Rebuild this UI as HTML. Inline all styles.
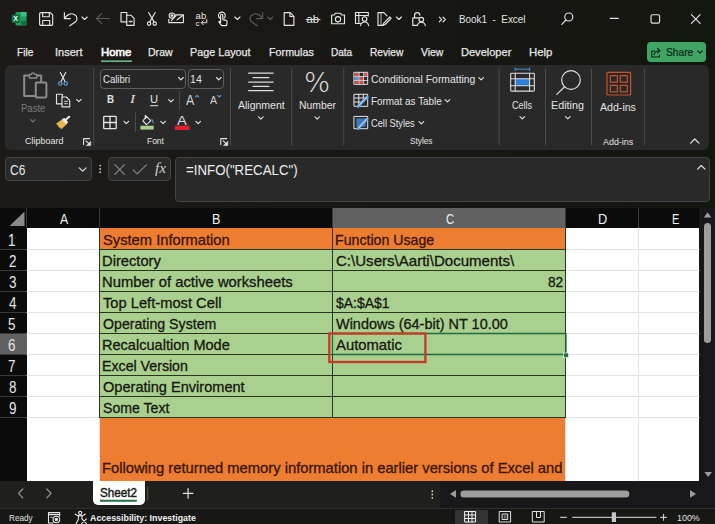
<!DOCTYPE html>
<html lang="en"><head><meta charset="utf-8"><title>Book1 - Excel</title>
<style>
html,body{margin:0;padding:0;background:#1b1816;}
#app{position:relative;width:715px;height:524px;overflow:hidden;background:linear-gradient(90deg,#1d1917 0%,#1a1815 35%,#161712 65%,#141610 100%);font-family:"Liberation Sans",sans-serif;}
.a{position:absolute;box-sizing:border-box;}
.t{position:absolute;white-space:pre;transform-origin:0 50%;font-family:"Liberation Sans",sans-serif;}
#ribbon{left:5px;top:64.5px;width:704px;height:85px;background:#292929;border-radius:6px;}
#share{left:647px;top:41.5px;width:59px;height:20.5px;background:#3fa562;border-radius:4px;}
.box{background:#292929;border:1px solid #444444;border-radius:4px;}
.inp{background:#262626;border:1px solid #5c5c5c;border-radius:4px;}
#ov{position:absolute;left:0;top:0;width:715px;height:524px;}

</style></head>
<body>
<div id="app">
<div class="a" id="ribbon"></div>
<div class="a" id="share"></div>
<div class="a inp" style="left:100px;top:68.5px;width:86px;height:20px;"></div>
<div class="a inp" style="left:187.5px;top:68.5px;width:36px;height:20px;"></div>
<div class="a box" style="left:5px;top:156.5px;width:86.5px;height:24px;"></div>
<div class="a box" style="left:108px;top:156.5px;width:63px;height:24px;"></div>
<div class="a box" style="left:174.5px;top:156.5px;width:535px;height:45.3px;"></div>
<!-- grid -->
<div class="a" style="left:0;top:208px;width:715px;height:272.5px;background:#0b0b0b;"></div>
<div class="a" style="left:27px;top:228px;width:672px;height:252.5px;background:#ffffff;"></div>
<div class="a" style="left:333px;top:208px;width:233px;height:20px;background:#616161;"></div>
<div class="a" style="left:0;top:334px;width:26.5px;height:20.5px;background:#616161;"></div>
<div class="a" style="left:699px;top:208px;width:16px;height:300px;background:#18181a;"></div>
<div class="a" style="left:100px;top:228px;width:466px;height:21px;background:#ed7d31;"></div>
<div class="a" style="left:100px;top:249px;width:466px;height:169px;background:#a9d08e;"></div>
<div class="a" style="left:100px;top:418px;width:466px;height:62.5px;background:#ed7d31;"></div>
<!-- tabs / status -->
<div class="a" style="left:0;top:480.5px;width:715px;height:28px;background:#1f1f1d;"></div>
<div class="a" style="left:440px;top:480.5px;width:275px;height:28px;background:#18181a;"></div>
<div class="a" style="left:93px;top:480.5px;width:52px;height:24px;background:#ffffff;border-radius:0 0 5px 5px;"></div>
<div class="a" style="left:0;top:508px;width:715px;height:16px;background:#171715;border-top:1px solid #2e2e2c;"></div>
<div class="a" style="left:454.5px;top:509.5px;width:33px;height:14.5px;background:#333333;"></div>
<svg id="ov" viewBox="0 0 715 524" fill="none" stroke-linecap="round" stroke-linejoin="round">
<!-- title bar icons -->
<g stroke="#e4e4e4" stroke-width="1.15">
<!-- excel logo -->
<rect x="15.5" y="12" width="11" height="13.5" rx="1.2" fill="#1f9c5c" stroke="none"/>
<rect x="21" y="12" width="5.5" height="4.5" fill="#35c283" stroke="none"/>
<rect x="21" y="21" width="5.5" height="4.5" fill="#12703f" stroke="none"/>
<rect x="11.7" y="14.5" width="8" height="8.5" rx="1" fill="#0f6f3c" stroke="none"/>
<!-- save -->
<path d="M41 12.6h9.3l2.4 2.4v9a1.4 1.4 0 0 1-1.4 1.4H41a1.4 1.4 0 0 1-1.4-1.4V14A1.400 1.400 0 0 1 41 12.600z"/>
<path d="M42.700 12.800v3.900h6.600v-3.900M42.700 25.200v-4.700h7v4.700"/>
<!-- undo -->
<path d="M64.400 12.600v6h6"/>
<path d="M64.600 18.400c2.200-3.800 6.400-5.600 9.700-4c3 1.600 3.600 5 1.300 7.400l-5.800 4"/>
<path d="M82 17l2.600 2.500l2.600-2.500"/>
<!-- copy/paste -->
<path d="M126.600 21.800h-5.600v-9.300h5.800v2.700"/>
<path d="M126.700 15.200h4.200l3.200 3.200v7h-7.400z"/>
<path d="M129.500 21.500h2.400" stroke-width="1.600"/>
<!-- scissors -->
<path d="M148.600 12.500l5.400 9.400M155.200 12.500l-5.400 9.400"/>
<circle cx="149.100" cy="23.600" r="1.700"/><circle cx="154.700" cy="23.600" r="1.700"/>
<!-- signature mail -->
<path d="M175.500 14.800h7.900v7.800h-14.600v-3.400"/>
<path d="M176 15.500l-4.600 5.200M183 15.200l-5.800 4.600"/>
<circle cx="171.800" cy="15.600" r="2.600"/><circle cx="171.800" cy="15.600" r="0.800"/>
<!-- hand -->
<path d="M220.400 18.600a3.400 3.400 0 1 1 3.800-0.600"/>
<path d="M220.600 22.400v-7a1.100 1.100 0 0 1 2.200 0v4.200l3.300 0.800c0.800 0.200 1.100 0.800 1 1.600l-0.600 3.600h-4.800l-2.900-3.800c0.500-0.800 1.200-0.600 1.800 0.600z"/>
<path d="M234.800 17l2.600 2.500l2.600-2.500"/>
<!-- new doc -->
<path d="M284.200 12.600h6l3.700 3.700v9.100h-9.700z"/><path d="M290 12.800v3.700h3.700"/>
<!-- camera -->
<path d="M331.600 15h2.600l1.200-1.800h5.200l1.200 1.800h2.700v8.700h-12.900z"/>
<circle cx="338" cy="19.300" r="2.600"/>
<!-- table person -->
<path d="M360.500 23.500h-5v-11h12.800v3.500M355.500 15.500h12.800M358.800 12.500v11"/>
<circle cx="364.600" cy="19" r="2.300"/>
<path d="M360.600 25.600c0.500-2.600 2-3.600 4-3.600s3.500 1 4 3.600"/>
<!-- doc pencil -->
<path d="M383 25.400h-5.000v-12.800h5.800l3.200 3.200"/>
<path d="M389.800 17l-6 6.200l-1 2.200l2.300-0.900l6-6.200z"/>
<path d="M381 13v12" stroke-width="0.800"/>
<path d="M396.400 17l2.500 2.500l2.500-2.500"/>
<!-- lock person -->
<path d="M417 25.400h-4.200v-7.600h6M414.600 17.600v-2.400a2.600 2.600 0 0 1 5.200 0"/>
<circle cx="421.300" cy="19.600" r="2.300"/>
<path d="M417.200 25.600c0.500-2.400 2-3.400 4.100-3.400s3.600 1 4.100 3.400"/>
<!-- >> -->
<path d="M439.300 17.200l2.300 2.300l-2.300 2.300M443 17.200l2.300 2.300l-2.300 2.300"/>
<path d="M101 61.200h31" stroke="#63b487" stroke-width="1.700" stroke-linecap="butt"/>
<!-- search -->
<circle cx="568.800" cy="17" r="4"/><path d="M566 20l-4.200 4.400"/>
<!-- window controls -->
<path d="M610.200 18.300h8"/>
<rect x="651" y="14.700" width="8.600" height="8.400" rx="1.600"/>
<path d="M691.400 14.700l8.800 8.600M700.200 14.700l-8.800 8.600"/>
</g>
<g stroke="#5a5a5a" stroke-width="1.150">
<path d="M96.600 18.500h13M101.800 13.300l-5.200 5.200l5.200 5.200"/>
<path d="M262.700 12.600v6h-6"/>
<path d="M262.500 18.400c-2.200-3.800-6.400-5.600-9.700-4c-3 1.600-3.600 5-1.300 7.400l5.800 4"/>
<path d="M267.800 17l2.500 2.500l2.500-2.500"/>
</g>
<g font-family="Liberation Sans, sans-serif" fill="#e4e4e4" stroke="none">
<text x="13.300" y="21.400" font-size="7" font-weight="bold" fill="#ffffff">X</text>
<text x="195.600" y="18.600" font-size="9.500">ab</text>
<text x="195.600" y="25.800" font-size="8">c</text>
<text x="306.600" y="23" font-size="11" textLength="12.500" lengthAdjust="spacingAndGlyphs">ab</text>
</g>
<g stroke="#e4e4e4" stroke-width="1">
<path d="M206.800 19.500v3.200h-5.500M203.300 20.700l-2 2l2 2"/>
<path d="M306 19.600h14"/>
</g>
<!-- ribbon separators -->
<g stroke="#4b4b4b" stroke-width="1">
<path d="M93.700 69v76M230.500 69v76M291.700 69v76M343.800 69v76M499.200 69v76M545.500 69v76M591.500 69v76M644.600 69v76"/>
<path d="M179.600 91.500v18.500M135.500 113v18.500"/>
</g>
<!-- paste -->
<g stroke="#8c8c8c" stroke-width="2">
<path d="M34.500 96h-10.300v-20.600h4.800M37 75.400h4.200v6"/>
<path d="M29.400 78v-3.600h2.200a1.500 1.500 0 0 1 3 0h2.200v3.600z" stroke-width="1.300"/>
<rect x="35.800" y="82.600" width="10.600" height="15" rx="1"/>
</g>
<path d="M30.600 119.600l2.300 2.300l2.300-2.300" stroke="#7a7a7a" stroke-width="1.100"/>
<!-- scissors -->
<g stroke-width="1.150">
<path d="M60.300 72.400l4.700 9.200M65.700 72.400l-4.700 9.200" stroke="#e4e4e4"/>
<circle cx="60.300" cy="83.500" r="1.700" stroke="#5b9bd5"/><circle cx="65.700" cy="83.500" r="1.700" stroke="#5b9bd5"/>
</g>
<!-- copy -->
<g stroke="#e4e4e4" stroke-width="1.150">
<path d="M61.500 103.800h-5v-9.600h5.800v2.800"/>
<path d="M62 97h4.300l3.400 3.400v6.400h-7.700z"/>
<path d="M64.500 101.300h3M64.500 103.700h3" stroke-width="0.900"/>
<path d="M76.600 99.400l2.300 2.300l2.300-2.300"/>
</g>
<!-- format painter -->
<path d="M57 123.500l5.500-4l3.800 4.600l-4.300 4.300c-2.400-0.400-4-2.200-5-4.900z" fill="#e8b84a" stroke="#e8b84a" stroke-width="0.800"/>
<path d="M62.500 119.500l1.500-1.500l3.800 4l-1.500 2z" fill="#f2f2f2" stroke="#f2f2f2" stroke-width="0.600"/>
<path d="M66 119.500l3.200-2.800" stroke="#f2f2f2" stroke-width="2"/>
<!-- launchers -->
<g stroke="#e4e4e4" stroke-width="1.100">
<path d="M83.600 144.600v-6h6M86 140.800l3.400 3.400"/>
<path d="M90.600 141.600v4h-4z" fill="#e4e4e4" stroke-width="0.600"/>
<path d="M220.800 144.600v-6h6M223.200 140.800l3.400 3.400"/>
<path d="M227.800 141.600v4h-4z" fill="#e4e4e4" stroke-width="0.600"/>
</g>
<!-- font chevrons -->
<g stroke="#e4e4e4" stroke-width="1.150">
<path d="M178.600 77.500l2.300 2.300l2.300-2.300"/>
<path d="M216.400 77.500l2.300 2.300l2.300-2.300"/>
<path d="M168.700 99.600l2.300 2.300l2.300-2.300"/>
<path d="M124 121.400l2.300 2.300l2.300-2.300"/>
<path d="M160.800 121.400l2.300 2.300l2.300-2.300"/>
<path d="M195.900 121.400l2.300 2.300l2.300-2.300"/>
<path d="M150.600 105.700h7.200" stroke-width="1"/>
</g>
<g stroke="#5b9bd5" stroke-width="1.100">
<path d="M195.400 97l1.600-1.700l1.600 1.700"/>
<path d="M217.600 95.300l1.600 1.700l1.600-1.700"/>
</g>
<!-- borders icon -->
<g stroke="#e4e4e4" stroke-width="1.300">
<rect x="103.700" y="116.400" width="12.500" height="12.300" rx="0.800"/>
<path d="M110 116.400v12.300M103.700 122.500h12.500"/>
</g>
<!-- fill bucket -->
<g stroke="#e4e4e4" stroke-width="1.100">
<path d="M146.200 116.200l4.600 4.600l-4.400 3.800l-3.400-3.600z"/>
<path d="M145.400 115.200v3.400"/>
<path d="M151.800 119.400c1 1.300 1.400 2.200 1.400 3.400" stroke="#5b9bd5"/>
</g>
<rect x="140.400" y="125.700" width="13.300" height="3.900" fill="#a9d08e"/>
<rect x="174.900" y="125.700" width="14.500" height="4.300" fill="#e0202a"/>
<!-- alignment -->
<g stroke="#dcdcdc" stroke-width="1.200">
<path d="M248.600 73.200h24.600M253 77.600h15.800M248.600 82.100h24.600M253 86.400h15.800M248.600 90.600h24.600"/>
<path d="M258.500 116.800l2.300 2.300l2.300-2.300"/>
<path d="M314.900 116.800l2.300 2.300l2.300-2.300"/>
<path d="M520 116.600l2.300 2.300l2.300-2.300"/>
<path d="M565.500 116.600l2.300 2.300l2.300-2.300"/>
</g>
<!-- conditional formatting -->
<g stroke-width="1">
<rect x="354.300" y="72.300" width="13.400" height="12" fill="#292929" stroke="#e4e4e4"/>
<rect x="355" y="73" width="3.800" height="3" fill="#e04a4a"/><rect x="355" y="77" width="3.800" height="3" fill="#5b9bd5"/><rect x="355" y="81" width="3.800" height="2.700" fill="#e04a4a"/>
<rect x="359.600" y="77" width="3.600" height="3" fill="#e04a4a"/><rect x="359.600" y="81" width="3.600" height="2.700" fill="#e04a4a"/><rect x="364" y="73" width="3.200" height="3" fill="#e04a4a"/>
<path d="M354.300 76.500h13.400M354.300 80.500h13.400M359.200 72.300v12M363.600 72.300v12" stroke="#e4e4e4" stroke-width="0.800"/>
</g>
<!-- format as table -->
<g stroke="#e4e4e4" stroke-width="1">
<rect x="354.300" y="94.300" width="13.400" height="12"/>
<path d="M354.300 98h13.400M354.300 102h7M358.800 94.300v12M363.300 94.300v5"/>
<path d="M358 106.500l9-9.500" stroke="#5b9bd5" stroke-width="3"/>
<path d="M358.500 106l8.500-9" stroke="#f2f2f2" stroke-width="0.800"/>
</g>
<!-- cell styles -->
<g stroke="#e4e4e4" stroke-width="1">
<rect x="354.300" y="116.400" width="13.400" height="12.300"/>
<rect x="356.300" y="118.400" width="9.400" height="8.300" fill="#3f78b8" stroke="none"/>
<path d="M358 128.500l9-9.500" stroke="#5b9bd5" stroke-width="3"/>
<path d="M358.500 128l8.500-9" stroke="#f2f2f2" stroke-width="0.800"/>
</g>
<g stroke="#e4e4e4" stroke-width="1.150">
<path d="M478.800 77.600l2.300 2.300l2.300-2.300"/>
<path d="M445.100 99.600l2.300 2.300l2.300-2.300"/>
<path d="M419.100 121.600l2.300 2.300l2.300-2.300"/>
</g>
<!-- cells icon -->
<rect x="515.200" y="78.700" width="14.400" height="7" fill="#2b7fd8"/>
<g stroke="#dcdcdc" stroke-width="1.100">
<rect x="510.700" y="73.300" width="23.600" height="17.800" rx="0.800"/>
<path d="M515.200 73.300v17.800M529.600 73.300v17.800M510.700 78.700h23.600M510.700 85.700h23.600"/>
</g>
<path d="M515.200 69.200h14.400M515.200 67.800v2.800M529.600 67.800v2.800" stroke="#3f8fe0" stroke-width="1"/>
<!-- editing -->
<g stroke="#dcdcdc" stroke-width="1.200">
<circle cx="571" cy="80" r="9.300"/><path d="M564.600 86.800l-7.800 7.600"/>
</g>
<!-- add-ins -->
<g stroke="#c2532a" stroke-width="1.200">
<rect x="607" y="72.400" width="23.600" height="22.600" rx="0.800"/>
<rect x="610.300" y="75.600" width="7" height="6.600"/><rect x="620.300" y="75.600" width="7" height="6.600"/>
<rect x="610.300" y="85.300" width="7" height="6.600"/><rect x="620.300" y="85.300" width="7" height="6.600"/>
</g>
<!-- collapse -->
<path d="M690.600 143.200l4.200-4.200l4.200 4.200" stroke="#e4e4e4" stroke-width="1.200"/>
<!-- share icon -->
<g stroke="#0b2414" stroke-width="1.100">
<path d="M654.500 51h-2.800v6h7.800v-2"/>
<path d="M654 55c0.500-3 2.500-4.300 5-4.300M657.500 48.300l2.600 2.400l-2.600 2.400"/>
<path d="M697.800 51l2.200 2.200l2.200-2.200"/>
</g>
<!-- formula bar icons -->
<g stroke="#e4e4e4" stroke-width="1.150">
<path d="M79.300 167.800l3.400 3.400l3.400-3.400"/>
<path d="M697.600 169.200l3.700-3.700l3.700 3.700"/>
</g>
<g fill="#cfcfcf" stroke="none"><circle cx="100.200" cy="165.600" r="0.900"/><circle cx="100.200" cy="168.900" r="0.900"/><circle cx="100.200" cy="172.200" r="0.900"/></g>
<g stroke="#8a8a8a" stroke-width="1.100">
<path d="M114.800 164.700l9.600 9.600M124.400 164.700l-9.600 9.600"/>
<path d="M133.200 169.800l3.900 4l9.400-9"/>
</g>
<!-- select-all triangle -->
<path d="M24.500 211.500v14.500h-15z" fill="#8a8a8a" stroke="none"/>
<!-- header separators -->
<g stroke="#3a3a3a" stroke-width="1">
<path d="M26.500 208v20M99.500 208v20M332.500 208v20M565.500 208v20M638.500 208v20"/>
<path d="M0 249.500h26.500M0 270.500h26.500M0 291.500h26.500M0 312.500h26.500M0 333.500h26.500M0 354.500h26.500M0 375.500h26.500M0 396.500h26.500M0 417.500h26.500"/>
</g>
<!-- light gridlines -->
<g stroke="#e2e2e2" stroke-width="1">
<path d="M27 249.500h72M27 270.500h72M27 291.500h72M27 312.500h72M27 333.500h72M27 354.500h72M27 375.500h72M27 396.500h72M27 417.500h72"/>
<path d="M566 249.500h133M566 270.500h133M566 291.500h133M566 312.500h133M566 333.500h133M566 354.500h133M566 375.500h133M566 396.500h133M566 417.500h133"/>
<path d="M638.500 228v252.500M99.500 418v62.500M565.500 418v62.500"/>
</g>
<!-- cell borders -->
<g stroke="#27361c" stroke-width="1" stroke-linecap="butt">
<path d="M99 249.500h467M99 270.500h467M99 291.500h467M99 312.500h467M99 333.500h467M99 354.500h467M99 375.500h467M99 396.500h467M99 417.500h467"/>
<path d="M99.500 228v190M332.500 228v190M565.500 228v190"/>
</g>
<!-- selection -->
<rect x="332.500" y="333.500" width="233.500" height="21" stroke="#1e6e42" stroke-width="1.300"/>
<rect x="564" y="353" width="4.500" height="4.500" fill="#1e6e42" stroke="#ffffff" stroke-width="0.600"/>
<!-- red highlight -->
<rect x="329.300" y="333.500" width="96.100" height="28.500" stroke="#cc372c" stroke-width="2.300" stroke-linejoin="miter"/>
<!-- vertical scrollbar -->
<path d="M703.800 217.500l3.800-5l3.800 5z" fill="#9d9d9d" stroke="none"/>
<rect x="704" y="223" width="7" height="120" rx="3.500" fill="#9d9d9d"/>
<path d="M704.400 472l3.800 5l3.800-5z" fill="#9d9d9d" stroke="none"/>
<!-- sheet nav -->
<g stroke="#9a9a9a" stroke-width="1.200">
<path d="M22.800 489l-4.300 4.400l4.300 4.400"/>
<path d="M46.800 489l4.300 4.400l-4.300 4.400"/>
</g>
<path d="M147.800 487v13" stroke="#555" stroke-width="1"/>
<path d="M100 500.700h36.800" stroke="#1e7145" stroke-width="2" stroke-linecap="butt"/>
<path d="M183.300 493.400h9.600M188.100 488.600v9.600" stroke="#e4e4e4" stroke-width="1.200"/>
<g fill="#cfcfcf" stroke="none"><circle cx="432.300" cy="491.200" r="0.900"/><circle cx="432.300" cy="494.500" r="0.900"/><circle cx="432.300" cy="497.800" r="0.900"/></g>
<path d="M456 490l-6 3.900l6 3.900z" fill="#9d9d9d" stroke="none"/>
<rect x="460.400" y="490.400" width="169" height="7" rx="3.500" fill="#9d9d9d"/>
<path d="M690 490l6 3.900l-6 3.900z" fill="#9d9d9d" stroke="none"/>
<!-- status icons -->
<g stroke="#e8e8e8" stroke-width="1.100">
<path d="M53 523h-4.500v-10.400h11.200v3.400M48.500 514.600h11.200"/>
<path d="M50.600 517.300h1.800" stroke-width="0.800"/>
<circle cx="56.400" cy="519.500" r="3.300"/><circle cx="56.400" cy="519.500" r="1.200" fill="#e8e8e8"/>
<circle cx="80.200" cy="513" r="1.600"/>
<path d="M75.200 514.200c1.600 1.300 3.200 1.700 5 1.700s3.400-0.400 5-1.700"/>
<path d="M78.400 516v3.200l-2.200 4.300M82 516v2.400"/>
<path d="M81.800 518.800l4.600 4.600M86.400 518.800l-4.600 4.600"/>
</g>
<g stroke="#f0f0f0" stroke-width="1">
<rect x="465" y="511.500" width="10.500" height="10.500"/>
<path d="M468.500 511.500v10.500M472 511.500v10.500M465 515h10.500M465 518.500h10.500"/>
</g>
<g stroke="#e0e0e0" stroke-width="1">
<rect x="499.600" y="511.500" width="11" height="10.500"/>
<rect x="502.500" y="514" width="5.200" height="5.500"/>
<path d="M504 516h2.200M504 517.800h2.200" stroke-width="0.700"/>
<path d="M532.700 511.500h11.500v10.500h-11.500zM536.500 511.500v6h4v-6"/>
<path d="M560.500 517.300h6"/>
<path d="M572.600 517.300h83.400"/>
<path d="M660.600 517.300h6M663.600 514.300v6"/>
</g>
<rect x="611.800" y="512.300" width="4.200" height="9.700" fill="#c8c8c8" stroke="none"/>

</svg>

<!-- text -->
<div class="t" style="left:458.72px;top:10.8px;line-height:17px;font-size:11.2px;color:#e4e4e4;transform:scaleX(0.8838);">Book1  -  Excel</div>
<div class="t" style="left:17.00px;top:44.3px;line-height:17px;font-size:11.4px;color:#e8e8e8;transform:scaleX(0.8889);-webkit-text-stroke:0.25px #e8e8e8;">File</div>
<div class="t" style="left:55.04px;top:44.3px;line-height:17px;font-size:11.4px;color:#e8e8e8;transform:scaleX(0.9643);-webkit-text-stroke:0.25px #e8e8e8;">Insert</div>
<div class="t" style="left:148.00px;top:44.3px;line-height:17px;font-size:11.4px;color:#e8e8e8;transform:scaleX(0.9259);-webkit-text-stroke:0.25px #e8e8e8;">Draw</div>
<div class="t" style="left:190.00px;top:44.3px;line-height:17px;font-size:11.4px;color:#e8e8e8;transform:scaleX(0.9469);-webkit-text-stroke:0.25px #e8e8e8;">Page Layout</div>
<div class="t" style="left:268.70px;top:44.3px;line-height:17px;font-size:11.4px;color:#e8e8e8;transform:scaleX(0.9438);-webkit-text-stroke:0.25px #e8e8e8;">Formulas</div>
<div class="t" style="left:331.00px;top:44.3px;line-height:17px;font-size:11.4px;color:#e8e8e8;transform:scaleX(0.8800);-webkit-text-stroke:0.25px #e8e8e8;">Data</div>
<div class="t" style="left:369.70px;top:44.3px;line-height:17px;font-size:11.4px;color:#e8e8e8;transform:scaleX(0.8895);-webkit-text-stroke:0.25px #e8e8e8;">Review</div>
<div class="t" style="left:421.00px;top:44.3px;line-height:17px;font-size:11.4px;color:#e8e8e8;transform:scaleX(0.9120);-webkit-text-stroke:0.25px #e8e8e8;">View</div>
<div class="t" style="left:461.40px;top:44.3px;line-height:17px;font-size:11.4px;color:#e8e8e8;transform:scaleX(0.9692);-webkit-text-stroke:0.25px #e8e8e8;">Developer</div>
<div class="t" style="left:529.00px;top:44.3px;line-height:17px;font-size:11.4px;color:#e8e8e8;transform:scaleX(1.0000);-webkit-text-stroke:0.25px #e8e8e8;">Help</div>
<div class="t" style="left:101.00px;top:44.3px;line-height:17px;font-size:11.4px;color:#ffffff;transform:scaleX(1.0000);-webkit-text-stroke:0.6px #ffffff;">Home</div>
<div class="t" style="left:665.50px;top:43.5px;line-height:17px;font-size:11.4px;color:#0b2414;transform:scaleX(0.8967);-webkit-text-stroke:0.2px #0b2414;">Share</div>
<div class="t" style="left:20.50px;top:100.0px;line-height:16px;font-size:10.6px;color:#7a7a7a;transform:scaleX(0.9000);">Paste</div>
<div class="t" style="left:24.70px;top:134.2px;line-height:14px;font-size:9.4px;color:#e4e4e4;transform:scaleX(0.9575);">Clipboard</div>
<div class="t" style="left:103.00px;top:70.5px;line-height:16px;font-size:10.6px;color:#e4e4e4;transform:scaleX(0.9000);">Calibri</div>
<div class="t" style="left:190.00px;top:70.5px;line-height:16px;font-size:10.6px;color:#e4e4e4;transform:scaleX(1.0000);">14</div>
<div class="t" style="left:107.10px;top:91.3px;line-height:17px;font-size:11.3px;color:#e4e4e4;transform:scaleX(0.8625);font-weight:bold;">B</div>
<div class="t" style="left:129.90px;top:91.3px;line-height:17px;font-size:11.8px;color:#e4e4e4;transform:scaleX(1.3000);font-family:'Liberation Serif',serif;font-style:italic;">I</div>
<div class="t" style="left:149.81px;top:91.3px;line-height:17px;font-size:11.3px;color:#e4e4e4;transform:scaleX(0.9857);">U</div>
<div class="t" style="left:186.00px;top:89.5px;line-height:20px;font-size:14px;color:#d4d4d4;transform:scaleX(0.8900);">A</div>
<div class="t" style="left:209.50px;top:92.0px;line-height:17px;font-size:11.5px;color:#d4d4d4;transform:scaleX(0.9125);">A</div>
<div class="t" style="left:177.20px;top:111.8px;line-height:18px;font-size:12px;color:#dcdcdc;transform:scaleX(1.2250);">A</div>
<div class="t" style="left:146.60px;top:134.2px;line-height:14px;font-size:9.4px;color:#e4e4e4;transform:scaleX(0.9000);">Font</div>
<div class="t" style="left:238.00px;top:97.3px;line-height:16px;font-size:10.6px;color:#e4e4e4;transform:scaleX(0.9915);">Alignment</div>
<div class="t" style="left:304.45px;top:64.0px;line-height:37px;font-size:27px;color:#e0e0e0;transform:scaleX(1.0227);font-family:'DejaVu Sans','Liberation Sans',sans-serif;font-weight:200;">%</div>
<div class="t" style="left:298.72px;top:97.3px;line-height:16px;font-size:10.6px;color:#e4e4e4;transform:scaleX(0.9811);">Number</div>
<div class="t" style="left:371.40px;top:71.0px;line-height:16px;font-size:10.6px;color:#e4e4e4;transform:scaleX(0.9792);">Conditional Formatting</div>
<div class="t" style="left:370.87px;top:93.0px;line-height:16px;font-size:10.6px;color:#e4e4e4;transform:scaleX(0.9347);">Format as Table</div>
<div class="t" style="left:371.40px;top:115.0px;line-height:16px;font-size:10.6px;color:#e4e4e4;transform:scaleX(0.8740);">Cell Styles</div>
<div class="t" style="left:410.00px;top:134.2px;line-height:14px;font-size:9.4px;color:#e4e4e4;transform:scaleX(0.8800);">Styles</div>
<div class="t" style="left:512.00px;top:97.3px;line-height:16px;font-size:10.6px;color:#e4e4e4;transform:scaleX(0.8542);">Cells</div>
<div class="t" style="left:551.28px;top:97.3px;line-height:16px;font-size:10.6px;color:#e4e4e4;transform:scaleX(1.0161);">Editing</div>
<div class="t" style="left:600.00px;top:98.5px;line-height:16px;font-size:10.6px;color:#e4e4e4;transform:scaleX(1.0000);">Add-ins</div>
<div class="t" style="left:602.60px;top:134.8px;line-height:14px;font-size:9.4px;color:#e4e4e4;transform:scaleX(0.9500);">Add-ins</div>
<div class="t" style="left:9.60px;top:159.5px;line-height:20px;font-size:14px;color:#e8e8e8;transform:scaleX(0.8556);">C6</div>
<div class="t" style="left:186.00px;top:159.5px;line-height:20px;font-size:14px;color:#f0f0f0;transform:scaleX(0.9487);">=INFO(&quot;RECALC&quot;)</div>
<div class="t" style="left:155.00px;top:159.0px;line-height:20px;font-size:14px;color:#d0d0d0;transform:scaleX(1.1000);font-family:'Liberation Serif',serif;font-style:italic;">fx</div>
<div class="t" style="left:59.70px;top:209.0px;line-height:20px;font-size:14px;color:#f0f0f0;transform:scaleX(0.8800);">A</div>
<div class="t" style="left:212.20px;top:209.0px;line-height:20px;font-size:14px;color:#f0f0f0;transform:scaleX(0.9000);">B</div>
<div class="t" style="left:445.50px;top:209.0px;line-height:20px;font-size:14px;color:#f0f0f0;transform:scaleX(0.8100);">C</div>
<div class="t" style="left:597.69px;top:209.0px;line-height:20px;font-size:14px;color:#f0f0f0;transform:scaleX(0.9111);">D</div>
<div class="t" style="left:671.51px;top:209.0px;line-height:20px;font-size:14px;color:#f0f0f0;transform:scaleX(0.7875);">E</div>
<div class="t" style="left:8.40px;top:228.8px;line-height:23px;font-size:16px;color:#e6e6e6;transform:scaleX(0.8400);">1</div>
<div class="t" style="left:8.82px;top:249.8px;line-height:23px;font-size:16px;color:#e6e6e6;transform:scaleX(0.8400);">2</div>
<div class="t" style="left:8.82px;top:270.8px;line-height:23px;font-size:16px;color:#e6e6e6;transform:scaleX(0.8400);">3</div>
<div class="t" style="left:8.82px;top:291.8px;line-height:23px;font-size:16px;color:#e6e6e6;transform:scaleX(0.8400);">4</div>
<div class="t" style="left:8.40px;top:312.8px;line-height:23px;font-size:16px;color:#e6e6e6;transform:scaleX(0.8400);">5</div>
<div class="t" style="left:8.40px;top:333.8px;line-height:23px;font-size:16px;color:#e6e6e6;transform:scaleX(0.8400);">6</div>
<div class="t" style="left:8.40px;top:354.8px;line-height:23px;font-size:16px;color:#e6e6e6;transform:scaleX(0.8400);">7</div>
<div class="t" style="left:8.82px;top:375.8px;line-height:23px;font-size:16px;color:#e6e6e6;transform:scaleX(0.8400);">8</div>
<div class="t" style="left:8.82px;top:396.8px;line-height:23px;font-size:16px;color:#e6e6e6;transform:scaleX(0.8400);">9</div>
<div class="t" style="left:103.00px;top:230.2px;line-height:21px;font-size:14.6px;color:#3a1405;transform:scaleX(1.0080);-webkit-text-stroke:0.3px #3a1405;">System Information</div>
<div class="t" style="left:101.99px;top:251.2px;line-height:21px;font-size:14.6px;color:#16160f;transform:scaleX(1.0086);-webkit-text-stroke:0.3px #16160f;">Directory</div>
<div class="t" style="left:101.99px;top:272.2px;line-height:21px;font-size:14.6px;color:#16160f;transform:scaleX(1.0134);-webkit-text-stroke:0.3px #16160f;">Number of active worksheets</div>
<div class="t" style="left:102.70px;top:293.2px;line-height:21px;font-size:14.6px;color:#16160f;transform:scaleX(1.0068);-webkit-text-stroke:0.3px #16160f;">Top Left-most Cell</div>
<div class="t" style="left:103.00px;top:314.2px;line-height:21px;font-size:14.6px;color:#16160f;transform:scaleX(0.9701);-webkit-text-stroke:0.3px #16160f;">Operating System</div>
<div class="t" style="left:102.00px;top:335.2px;line-height:21px;font-size:14.6px;color:#16160f;transform:scaleX(0.9969);-webkit-text-stroke:0.3px #16160f;">Recalcualtion Mode</div>
<div class="t" style="left:102.03px;top:356.2px;line-height:21px;font-size:14.6px;color:#16160f;transform:scaleX(0.9713);-webkit-text-stroke:0.3px #16160f;">Excel Version</div>
<div class="t" style="left:103.00px;top:377.2px;line-height:21px;font-size:14.6px;color:#16160f;transform:scaleX(0.9979);-webkit-text-stroke:0.3px #16160f;">Operating Enviroment</div>
<div class="t" style="left:103.00px;top:398.2px;line-height:21px;font-size:14.6px;color:#16160f;transform:scaleX(0.9667);-webkit-text-stroke:0.3px #16160f;">Some Text</div>
<div class="t" style="left:335.03px;top:230.2px;line-height:21px;font-size:14.6px;color:#3a1405;transform:scaleX(0.9703);-webkit-text-stroke:0.3px #3a1405;">Function Usage</div>
<div class="t" style="left:336.00px;top:251.2px;line-height:21px;font-size:14.6px;color:#16160f;transform:scaleX(1.0318);-webkit-text-stroke:0.3px #16160f;">C:\Users\Aarti\Documents\</div>
<div class="t" style="left:548.00px;top:272.2px;line-height:21px;font-size:14.6px;color:#16160f;transform:scaleX(0.9375);-webkit-text-stroke:0.3px #16160f;">82</div>
<div class="t" style="left:336.00px;top:293.2px;line-height:21px;font-size:14.6px;color:#16160f;transform:scaleX(0.9554);-webkit-text-stroke:0.3px #16160f;">$A:$A$1</div>
<div class="t" style="left:336.00px;top:314.2px;line-height:21px;font-size:14.6px;color:#16160f;transform:scaleX(0.9913);-webkit-text-stroke:0.3px #16160f;">Windows (64-bit) NT 10.00</div>
<div class="t" style="left:336.00px;top:335.2px;line-height:21px;font-size:14.6px;color:#16160f;transform:scaleX(1.0154);-webkit-text-stroke:0.3px #16160f;">Automatic</div>
<div class="t" style="left:101.99px;top:457.7px;line-height:21px;font-size:14.6px;color:#3a1405;transform:scaleX(1.0099);-webkit-text-stroke:0.3px #3a1405;">Following returned memory information in earlier versions of Excel and</div>
<div class="t" style="left:100.00px;top:482.8px;line-height:19px;font-size:13px;color:#1a1a1a;transform:scaleX(0.8976);-webkit-text-stroke:0.45px #1a1a1a;">Sheet2</div>
<div class="t" style="left:8.60px;top:510.8px;line-height:14px;font-size:9.6px;color:#e0e0e0;transform:scaleX(0.8500);">Ready</div>
<div class="t" style="left:89.80px;top:510.8px;line-height:14px;font-size:9.6px;color:#f0f0f0;transform:scaleX(0.9235);font-weight:bold;">Accessibility: Investigate</div>
<div class="t" style="left:677.07px;top:510.8px;line-height:14px;font-size:9.6px;color:#e0e0e0;transform:scaleX(0.9292);">100%</div>
</div>
</body></html>
